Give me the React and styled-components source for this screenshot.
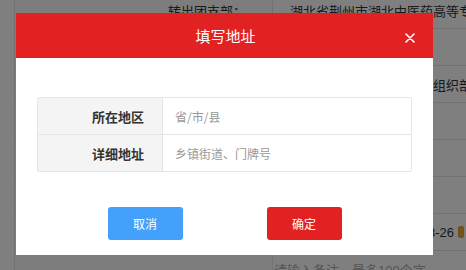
import React from 'react'
import styled, { createGlobalStyle } from 'styled-components'

const GlobalStyle = createGlobalStyle`
  html, body {
    margin: 0;
    padding: 0;
    background: #fff;
    overflow: hidden;
  }
  body {
    font-family: "Liberation Sans", "Noto Sans CJK SC", sans-serif;
  }
`

const rows = [
  { label: '转出团支部：', value: '湖北省荆州市湖北中医药高等专科学校', indent: 17 },
  { label: '', value: '' },
  { label: '', value: '湖北中医药高等专科学校组织部', indent: 17 },
  { label: '', value: '' },
  { label: '', value: '' },
  { label: '', value: '' },
  { label: '', value: '2019-08-26', right: true, icon: true },
  { label: '', value: '请输入备注，最多100个字', hint: true, indent: 1 },
]

const App = () => {
  return (
    <>
      <GlobalStyle />
      <Page>
        {rows.map((r, i) => (
          <PageRow key={i}>
            <PageLabel>{r.label}</PageLabel>
            <PageValue hint={r.hint} right={r.right} indent={r.indent}>
              {r.value}
              {r.icon && <Pin />}
            </PageValue>
          </PageRow>
        ))}
      </Page>

      <Overlay>
        <Dialog>
          <DialogHeader>
            填写地址
            <CloseButton>
              <svg width="10" height="10" viewBox="0 0 10 10">
                <path d="M1 1L9 9M9 1L1 9" stroke="#fff" strokeWidth="1.6" strokeLinecap="round" />
              </svg>
            </CloseButton>
          </DialogHeader>
          <DialogBody>
            <FormTable>
              <FormRow>
                <FormLabel>所在地区</FormLabel>
                <FormInput placeholder="省/市/县" />
              </FormRow>
              <FormRow last>
                <FormLabel>详细地址</FormLabel>
                <FormInput placeholder="乡镇街道、门牌号" />
              </FormRow>
            </FormTable>
            <Actions>
              <Button color="#43a0fb">取消</Button>
              <Button color="#e22222">确定</Button>
            </Actions>
          </DialogBody>
        </Dialog>
      </Overlay>
    </>
  )
}

export default App

const Page = styled.div`
  margin-top: -8px;
  height: calc(100vh + 8px);
  overflow: hidden;
  display: flex;
  flex-direction: column;
`

const PageRow = styled.div`
  flex: none;
  display: grid;
  grid-template-columns: 259px 193px;
  height: 36px;
  border-bottom: 1px solid #e4e4e4;
  margin-left: 14px;
`

const PageLabel = styled.div`
  display: flex;
  align-items: center;
  justify-content: flex-end;
  padding-right: 26px;
  font-size: 13px;
  color: #333;
  border-right: 1px solid #e4e4e4;
  border-left: 1px solid #e4e4e4;
  background: #fafafa;
`

const PageValue = styled.div`
  display: flex;
  align-items: center;
  gap: 4px;
  padding: 0 2px 0 ${p => p.indent || 14}px;
  font-size: 13px;
  white-space: nowrap;
  overflow: hidden;
  color: ${p => (p.hint ? '#aaa' : '#333')};
  justify-content: ${p => (p.right ? 'flex-end' : 'flex-start')};
`

const Pin = styled.span`
  display: inline-block;
  flex: none;
  width: 6px;
  height: 12px;
  background: #e8a33a;
  border-radius: 2px;
`

const Overlay = styled.div`
  position: fixed;
  inset: 0;
  background: rgba(0, 0, 0, 0.5);
`

const Dialog = styled.div`
  position: absolute;
  left: 16px;
  top: 13px;
  width: 417px;
  height: 242px;
  background: #fff;
  display: flex;
  flex-direction: column;
`

const DialogHeader = styled.div`
  position: relative;
  height: 45px;
  background: #e22222;
  color: #fff;
  font-family: "Noto Sans CJK SC", sans-serif;
  font-size: 15px;
  display: flex;
  align-items: center;
  justify-content: center;
  padding-left: 2px;
`

const CloseButton = styled.span`
  position: absolute;
  right: 18px;
  top: 20px;
  display: flex;
`

const DialogBody = styled.div`
  padding: 39px 21px 0;
  display: flex;
  flex-direction: column;
`

const FormTable = styled.div`
  border: 1px solid #e6e6e6;
  border-radius: 2px;
  display: flex;
  flex-direction: column;
`

const FormRow = styled.div`
  display: grid;
  grid-template-columns: 125px 1fr;
  height: 36px;
  border-bottom: ${p => (p.last ? 'none' : '1px solid #e6e6e6')};
`

const FormLabel = styled.div`
  background: #f4f4f4;
  border-right: 1px solid #e6e6e6;
  display: flex;
  align-items: center;
  justify-content: flex-end;
  padding-right: 18px;
  font-family: "Noto Sans CJK SC", sans-serif;
  font-size: 13px;
  font-weight: 700;
  color: #333;
`

const FormInput = styled.input`
  border: none;
  outline: none;
  padding: 0 12px;
  font-family: "Noto Sans CJK SC", sans-serif;
  font-size: 12px;
  color: #333;
  background: #fff;
  &::placeholder {
    color: #999;
  }
`

const Actions = styled.div`
  margin-top: 35px;
  display: flex;
  justify-content: center;
  gap: 84px;
`

const Button = styled.button`
  width: 75px;
  height: 33px;
  border: none;
  border-radius: 3px;
  background: ${p => p.color};
  color: #fff;
  font-family: "Noto Sans CJK SC", sans-serif;
  font-size: 12px;
  padding: 0;
`
